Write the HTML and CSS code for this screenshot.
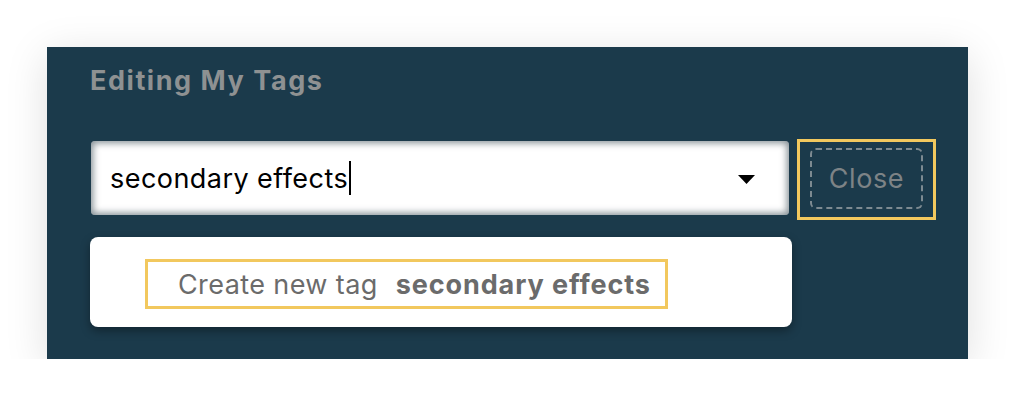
FILE: index.html
```html
<!DOCTYPE html>
<html>
<head>
<meta charset="utf-8">
<link rel="stylesheet" href="styles.css">
</head>
<body>
<div class="panel">
  <h2 class="title">Editing My Tags</h2>
  <div class="row">
    <div class="input">
      <span class="value">secondary effects</span><span class="caret"></span>
      <svg class="arrow" width="17" height="9" viewBox="0 0 17 9"><path d="M0 0H17L8.5 9Z" fill="#000"/></svg>
    </div>
    <div class="close-focus">
      <button class="close">Close</button>
    </div>
  </div>
  <div class="menu">
    <div class="option">
      <span class="opt-label">Create new tag</span><span class="opt-value">secondary effects</span>
    </div>
  </div>
</div>
</body>
</html>
```
FILE: styles.css
```css
html, body {
  margin: 0;
  padding: 0;
  background: #ffffff;
}
body {
  padding: 47px 0 0 47px;
  font-family: Inter, "Noto Sans", sans-serif;
}
.panel {
  width: 921px;
  height: 312px;
  box-sizing: border-box;
  background: #1b3a4b;
  box-shadow: 0 8px 40px rgba(0, 0, 0, 0.13);
  padding: 18px 0 0 43px;
}
.title {
  margin: 0;
  font-size: 27px;
  line-height: 32px;
  font-weight: 700;
  letter-spacing: 1.55px;
  color: #8e9192;
}
.row {
  display: flex;
  align-items: flex-start;
  margin-top: 42px;
  gap: 8px;
}
.input {
  margin-top: 2px;
  margin-left: 1px;
  width: 698px;
  height: 74px;
  box-sizing: border-box;
  background: #fff;
  border-radius: 4px;
  box-shadow: inset 0 0 7px 2px rgba(30, 50, 60, 0.55);
  display: flex;
  align-items: center;
  padding: 0 34px 0 19px;
}
.value {
  font-size: 27px;
  letter-spacing: 0.45px;
  color: #000;
}
.caret {
  display: inline-block;
  width: 2px;
  height: 34px;
  background: #000;
  margin-left: 1px;
}
.arrow {
  margin-left: auto;
  margin-top: 2px;
}
.close-focus {
  width: 139px;
  height: 81px;
  box-sizing: border-box;
  border: 3px solid #f2c85e;
  padding: 6px 10px 8px 10px;
}
.close {
  width: 113px;
  height: 61px;
  box-sizing: border-box;
  background: transparent;
  border: 2px dashed #7d8a91;
  border-radius: 6px;
  color: #7d8386;
  font-family: Inter, "Noto Sans", sans-serif;
  font-size: 27px;
  letter-spacing: 0.6px;
  padding: 0;
}
.menu {
  margin-top: 17px;
  width: 702px;
  height: 90px;
  box-sizing: border-box;
  background: #fff;
  border-radius: 8px;
  box-shadow: 0 4px 10px rgba(0, 0, 0, 0.35);
  padding: 22px 0 0 55px;
}
.option {
  display: inline-flex;
  align-items: center;
  height: 50px;
  box-sizing: border-box;
  border: 3px solid #f2c85e;
  padding: 0 14px 0 30px;
  font-size: 27px;
  letter-spacing: 0.4px;
  color: #6b6b6b;
}
.opt-value {
  font-weight: 700;
  letter-spacing: 0.9px;
  margin-left: 18px;
}
```
